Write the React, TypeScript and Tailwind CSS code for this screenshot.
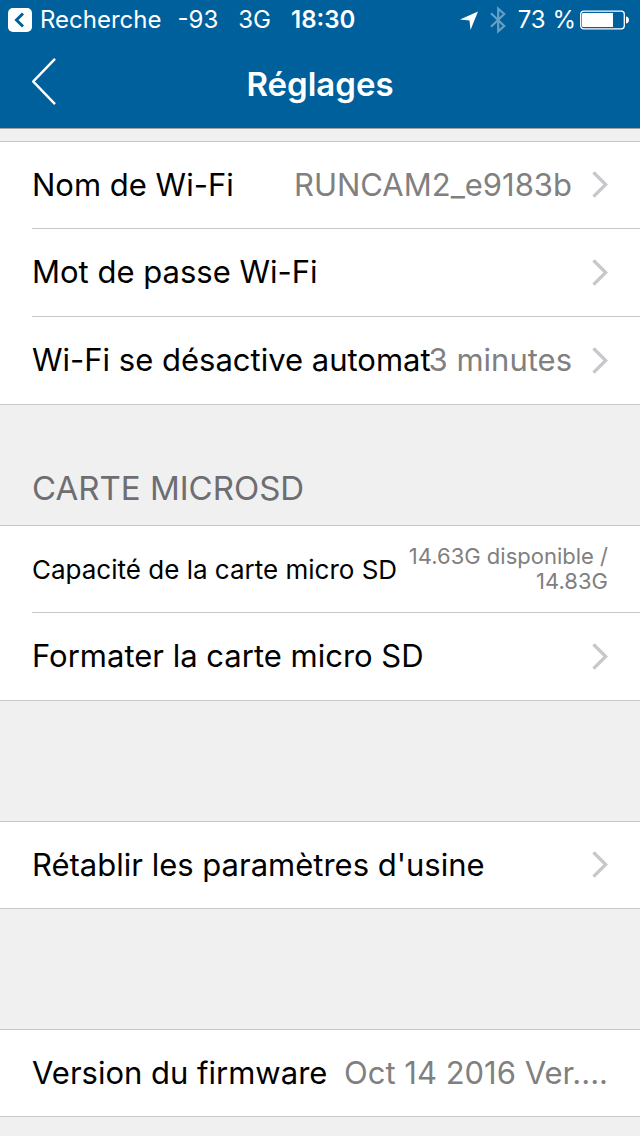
import { ReactNode } from "react";

interface RowProps {
  label: string;
  value?: string;
  small?: boolean;
  link?: boolean;
  first?: boolean;
  last?: boolean;
}

function ChevronRight() {
  return (
    <svg className="w-4 h-7 shrink-0" viewBox="0 0 16 28" fill="none" stroke="#c7c7cc" strokeWidth="3.4" aria-hidden="true">
      <path d="M1.5 1.4 13.7 13.5 1.5 25.6" />
    </svg>
  );
}

function Row({ label, value, small, link, first, last }: RowProps) {
  const border = `${first ? "border-t" : ""} ${last ? "border-b" : ""}`;
  const content = (
    <span className={`flex-1 min-w-0 h-full flex items-center justify-between pr-8 border-[#c8c7cc] ${last ? "" : "border-b"}`}>
      <span className={`min-w-0 whitespace-nowrap text-black ${small ? "text-[26px]" : "text-[31px]"}`}>{label}</span>
      <span className="shrink-0 flex items-center gap-5">
        {value && (
          <span className={`text-right text-[#808080] ${small ? "w-[206px] text-[22px] leading-[25px]" : "whitespace-nowrap text-[31px]"}`}>
            {value}
          </span>
        )}
        {link && <ChevronRight />}
      </span>
    </span>
  );
  const className = `w-full h-[88px] pl-8 flex items-stretch text-left bg-white border-[#c8c7cc] ${border}`;

  return link ? (
    <button type="button" className={className}>{content}</button>
  ) : (
    <div className={className}>{content}</div>
  );
}

function Section({ title, children }: { title?: string; children: ReactNode }) {
  return (
    <section>
      <div className="h-[120px] px-8 pb-[17px] flex items-end">
        {title && <h2 className="text-[33px] leading-10 text-[#6d6d72]">{title}</h2>}
      </div>
      {children}
    </section>
  );
}

function StatusBar() {
  return (
    <div className="h-10 pl-2 pr-[11px] flex items-center justify-between text-2xl">
      <div className="flex items-center">
        <button type="button" className="flex items-center gap-2">
          <svg className="w-6 h-6" viewBox="0 0 24 24" aria-hidden="true">
            <rect width="24" height="24" rx="5" fill="#fff" />
            <path d="M15 5.5 8.5 12l6.5 6.5" fill="none" stroke="#00609c" strokeWidth="3" />
          </svg>
          Recherche
        </button>
        <span className="ml-4">-93</span>
        <span className="ml-5">3G</span>
        <span className="ml-5 font-semibold">18:30</span>
      </div>
      <div className="flex items-center">
        <svg className="w-[18px] h-5" viewBox="0 0 18 20" fill="#fff" aria-hidden="true">
          <path d="M18 1.5 10.5 20 9.5 10.5 0 9.4z" />
        </svg>
        <svg className="w-4 h-7 ml-3" viewBox="0 0 16 28" fill="none" stroke="#66a0c4" strokeWidth="2.2" aria-hidden="true">
          <path d="M1 7.3 14.2 20 8.2 25.4V2.6L14.2 8 1 20.7" />
        </svg>
        <span className="ml-3 whitespace-nowrap">73 %</span>
        <svg className="w-[49px] h-5 ml-1" viewBox="0 0 49 20" aria-hidden="true">
          <rect x="0.7" y="1.2" width="43.6" height="17.6" rx="3" fill="none" stroke="#fff" strokeWidth="1.3" />
          <path d="M2 4a1 1 0 0 1 1-1h30v14H3a1 1 0 0 1-1-1z" fill="#fff" />
          <path d="M46 6.5c1.6 0 3 1.2 3 3.5s-1.4 3.5-3 3.5z" fill="#fff" />
        </svg>
      </div>
    </div>
  );
}

export default function App() {
  return (
    <div className="min-h-screen bg-[#f0f0f0] font-['Inter','Liberation_Sans',sans-serif]">
      <header className="bg-[#00609c] text-white border-b border-[#a0a3a6]">
        <StatusBar />
        <nav className="h-[88px] px-8 grid grid-cols-[1fr_auto_1fr] items-center">
          <button type="button" aria-label="Retour" className="justify-self-start">
            <svg className="w-6 h-[52px]" viewBox="0 0 24 52" fill="none" stroke="#fff" strokeWidth="2.4" aria-hidden="true">
              <path d="M23 .8 1.3 23.5 23 46.2" />
            </svg>
          </button>
          <h1 className="pt-0.5 text-[33px] font-semibold">Réglages</h1>
        </nav>
      </header>

      <main className="pt-3 pb-5">
        <Row label="Nom de Wi-Fi" value="RUNCAM2_e9183b" link first />
        <Row label="Mot de passe Wi-Fi" link />
        <Row label="Wi-Fi se désactive automat" value="3 minutes" link last />

        <Section title="CARTE MICROSD">
          <Row label="Capacité de la carte micro SD" value="14.63G disponible / 14.83G" small first />
          <Row label="Formater la carte micro SD" link last />
        </Section>

        <Section>
          <Row label="Rétablir les paramètres d'usine" link first last />
        </Section>

        <Section>
          <Row label="Version du firmware" value="Oct 14 2016 Ver...." first last />
        </Section>
      </main>
    </div>
  );
}
